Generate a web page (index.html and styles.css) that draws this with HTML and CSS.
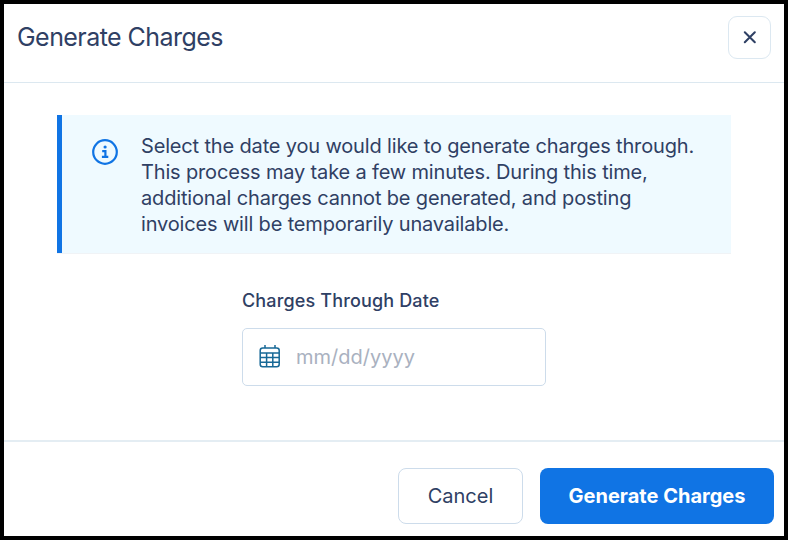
FILE: index.html
```html
<!DOCTYPE html>
<html lang="en">
<head>
  <meta charset="UTF-8" />
  <meta name="viewport" content="width=device-width, initial-scale=1.0" />
  <title>Generate Charges</title>
  <link rel="stylesheet" href="styles.css">
</head>
<body>
  <div class="modal">
    <header class="modal-header">
      <h1>Generate Charges</h1>
      <button class="close-btn" aria-label="Close">
        <svg width="14" height="14" viewBox="0 0 14 14" fill="none" stroke="currentColor" stroke-width="2" stroke-linecap="round">
          <path d="M1.8 1.3l10 10M11.8 1.3l-10 10" />
        </svg>
      </button>
    </header>

    <main class="modal-body">
      <div class="notice">
        <svg class="info-icon" width="26" height="26" viewBox="0 0 26 26" fill="none" stroke="currentColor" stroke-width="2.2">
          <circle cx="13" cy="13" r="11.8" />
          <path d="M10.2 12.2h3.2v5.6M9.9 17.8h6.4" />
          <circle cx="13.1" cy="8" r="1.6" fill="currentColor" stroke="none" />
        </svg>
        <p>
          Select the date you would like to generate charges through.<br>
          This process may take a few minutes. During this time,<br>
          additional charges cannot be generated, and posting<br>
          invoices will be temporarily unavailable.
        </p>
      </div>

      <div class="field">
        <label for="throughDate">Charges Through Date</label>
        <div class="date-input">
          <svg width="22" height="24" viewBox="0 0 22 24" fill="none" stroke="currentColor" stroke-width="1.5">
            <rect x="1.2" y="3" width="19" height="18.8" rx="2.5" />
            <path d="M6 0v3M16 0v3M1.2 8h19M1.2 12.6h19M1.2 17.2h19M7.6 8v13.8M13.8 8v13.8" />
          </svg>
          <input type="text" id="throughDate" placeholder="mm/dd/yyyy" />
        </div>
      </div>
    </main>

    <footer class="modal-footer">
      <button class="btn btn-cancel">Cancel</button>
      <button class="btn btn-primary">Generate Charges</button>
    </footer>
  </div>
</body>
</html>
```
FILE: styles.css
```css
* {
  box-sizing: border-box;
}
body {
  margin: 0;
  font-family: Inter, "Liberation Sans", sans-serif;
  color: #2f4064;
}
button,
input {
  font-family: inherit;
  color: inherit;
}
.modal {
  display: flex;
  flex-direction: column;
  width: 788px;
  height: 540px;
  border: 4px solid #000;
  background: #fff;
}
.modal-header {
  display: flex;
  justify-content: space-between;
  align-items: flex-start;
  height: 79px;
  padding: 12px 13px 0 13px;
  border-bottom: 1px solid #dce8f0;
}
.modal-header h1 {
  margin: 5px 0 0;
  font-size: 25px;
  line-height: 32px;
  font-weight: 400;
  letter-spacing: -0.55px;
}
.close-btn {
  display: flex;
  align-items: center;
  justify-content: center;
  width: 43px;
  height: 43px;
  padding: 0;
  background: #fff;
  border: 1px solid #dce8f1;
  border-radius: 9px;
}
.modal-body {
  flex: 1;
  padding: 32px 53px 0;
}
.notice {
  display: flex;
  gap: 23px;
  height: 138px;
  padding: 18px 0 0 30px;
  background: #effaff;
  border-left: 5px solid #1074e4;
  box-shadow: 0 1px 0 #f0f3f6;
}
.info-icon {
  flex: none;
  margin-top: 6px;
  color: #1074e4;
}
.notice p {
  margin: 0;
  font-size: 20px;
  line-height: 26px;
  letter-spacing: -0.16px;
  white-space: nowrap;
}
.field {
  width: 304px;
  margin: 36px 0 0 185px;
}
.field label {
  display: block;
  font-size: 18px;
  line-height: 24px;
  font-weight: 500;
  letter-spacing: 0.15px;
}
.date-input {
  display: flex;
  align-items: center;
  gap: 15px;
  height: 58px;
  margin-top: 15px;
  padding: 0 16px;
  border: 1px solid #cddceb;
  border-radius: 5px;
}
.date-input svg {
  flex: none;
  color: #176896;
}
.date-input input {
  width: 100%;
  padding: 0;
  border: none;
  outline: none;
  background: none;
  font-size: 20px;
}
.date-input input::placeholder {
  color: #a9b1c0;
}
.modal-footer {
  display: flex;
  justify-content: flex-end;
  gap: 17px;
  height: 96px;
  padding: 26px 10px 0;
  border-top: 2px solid #e4edf3;
}
.btn {
  height: 56px;
  padding: 0;
  border-radius: 8px;
  font-size: 20px;
}
.btn-cancel {
  width: 125px;
  background: #fff;
  border: 1px solid #cddceb;
}
.btn-primary {
  width: 234px;
  background: #1074e4;
  border: none;
  color: #fff;
  font-weight: 700;
}
```
